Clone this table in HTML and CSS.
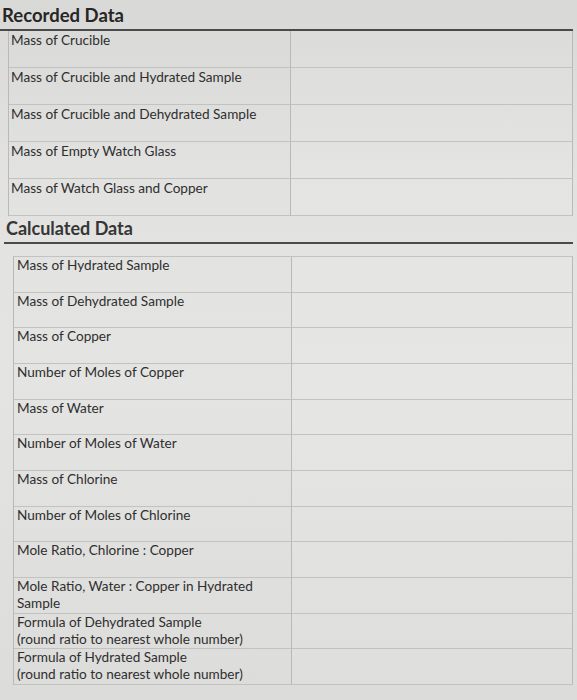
FILE: index.html
```html
<!DOCTYPE html>
<html lang="en">
<head>
<meta charset="utf-8">
<title>Recorded Data</title>
<link rel="stylesheet" href="styles.css">
</head>
<body>
<main class="sheet">
  <h2 class="title title-recorded">Recorded Data</h2>
  <div class="grid grid-recorded">
    <div class="label">Mass of Crucible</div><div class="value"></div>
    <div class="label">Mass of Crucible and Hydrated Sample</div><div class="value"></div>
    <div class="label">Mass of Crucible and Dehydrated Sample</div><div class="value"></div>
    <div class="label">Mass of Empty Watch Glass</div><div class="value"></div>
    <div class="label">Mass of Watch Glass and Copper</div><div class="value"></div>
  </div>
  <h2 class="title title-calc">Calculated Data</h2>
  <div class="grid grid-calc">
    <div class="label">Mass of Hydrated Sample</div><div class="value"></div>
    <div class="label">Mass of Dehydrated Sample</div><div class="value"></div>
    <div class="label">Mass of Copper</div><div class="value"></div>
    <div class="label">Number of Moles of Copper</div><div class="value"></div>
    <div class="label">Mass of Water</div><div class="value"></div>
    <div class="label">Number of Moles of Water</div><div class="value"></div>
    <div class="label">Mass of Chlorine</div><div class="value"></div>
    <div class="label">Number of Moles of Chlorine</div><div class="value"></div>
    <div class="label">Mole Ratio, Chlorine : Copper</div><div class="value"></div>
    <div class="label">Mole Ratio, Water : Copper in Hydrated Sample</div><div class="value"></div>
    <div class="label">Formula of Dehydrated Sample<br>(round ratio to nearest whole number)</div><div class="value"></div>
    <div class="label">Formula of Hydrated Sample<br>(round ratio to nearest whole number)</div><div class="value"></div>
  </div>
</main>
</body>
</html>
```
FILE: styles.css
```css
html, body {
  margin: 0;
  padding: 0;
}
body {
  width: 577px;
  height: 700px;
  overflow: hidden;
  background: linear-gradient(180deg, #d8d8d6 0%, #e2e2e0 25%, #e4e4e2 55%, #dcdcda 100%);
  font-family: Lato, "Open Sans", sans-serif;
  color: #2f2f2f;
}
.sheet {
  display: flex;
  flex-direction: column;
  width: 577px;
}
.title {
  margin: 0;
  font-size: 18.5px;
  font-weight: 700;
  line-height: 20px;
  color: #262626;
  border-bottom: 2px solid #4a4a4a;
}
.title-recorded {
  width: 571px;
  padding: 5px 0 4px 2px;
}
.title-calc {
  margin: 0 0 0 4px;
  width: 567px;
  padding: 2px 0 4px 2px;
  font-size: 18px;
  color: #363636;
}
.grid {
  display: grid;
  border-left: 1px solid #b9b9b7;
}
.grid-recorded {
  margin-left: 8px;
  width: 564px;
  grid-template-columns: 282px 1fr;
  grid-auto-rows: 37px;
}
.grid-calc {
  margin: 12px 0 0 13px;
  width: 559px;
  border-top: 1px solid #c2c2c0;
  grid-template-columns: 278px 1fr;
  grid-auto-rows: 35.67px;
}
.label, .value {
  border-right: 1px solid #b9b9b7;
  border-bottom: 1px solid #c2c2c0;
  box-sizing: border-box;
}
.label {
  font-size: 13.6px;
  line-height: 17px;
  padding: 1px 4px 0 2px;
}
.grid-calc .label {
  padding: 0 4px 0 3px;
}
.value {
  background: rgba(255, 255, 255, 0.08);
}
```
